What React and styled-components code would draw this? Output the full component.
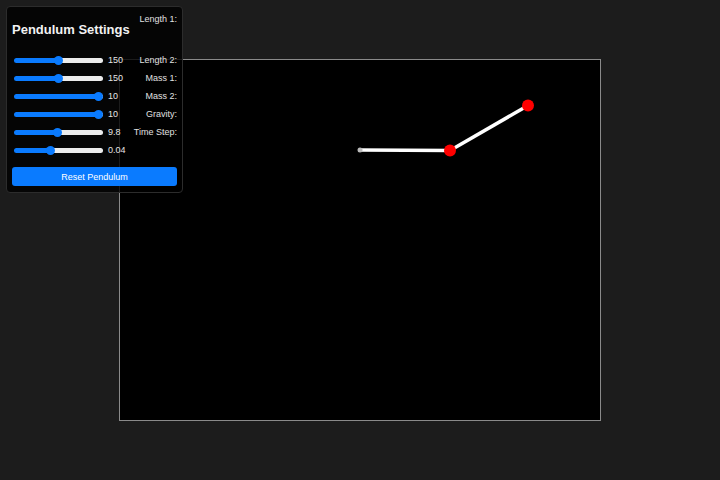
import React, { useState } from "react";
import styled, { createGlobalStyle } from "styled-components";

const GlobalStyle = createGlobalStyle`
  html, body {
    margin: 0;
    padding: 0;
    background: #1c1c1c;
    font-family: "Liberation Sans", Arial, sans-serif;
  }
`;

const Page = styled.div`
  position: relative;
  height: 100vh;
  display: flex;
  align-items: center;
  justify-content: center;
`;

const Stage = styled.div`
  width: 480px;
  height: 360px;
  border: 1px solid #8a8a8a;
  background: #000;
`;

const Panel = styled.div`
  position: absolute;
  top: 6px;
  left: 6px;
  width: 165px;
  padding: 3px 5px 6px;
  background: rgba(0, 0, 0, 0.8);
  border: 1px solid #2c2c2c;
  border-radius: 4px;
  color: #eee;
`;

const Top = styled.div`
  display: flex;
  justify-content: space-between;
`;

const Controls = styled.div`
  display: flex;
  flex-direction: column;
  min-width: 0;
`;

const Title = styled.h2`
  margin: 12px 0 13px;
  font-size: 13px;
  line-height: 16px;
  font-weight: 700;
  white-space: nowrap;
  color: #f2f2f2;
`;

const Row = styled.div`
  display: flex;
  align-items: center;
  height: 18px;
`;

const Slider = styled.input`
  -webkit-appearance: none;
  appearance: none;
  width: 89px;
  height: 18px;
  margin: 0 5px 0 2px;
  background: transparent;

  &::-webkit-slider-runnable-track {
    height: 5px;
    border-radius: 3px;
    background: ${({ $fill }) =>
      `linear-gradient(to right, #0a7bff ${$fill}%, #ececec ${$fill}%)`};
  }

  &::-webkit-slider-thumb {
    -webkit-appearance: none;
    width: 9px;
    height: 9px;
    margin-top: -2px;
    border-radius: 50%;
    background: #0a7bff;
    border: none;
  }
`;

const Value = styled.span`
  font-size: 9px;
  color: #e6e6e6;
`;

const Labels = styled.div`
  display: flex;
  flex-direction: column;
  align-items: flex-end;
  flex-shrink: 0;
`;

const Label = styled.label`
  height: 18px;
  line-height: 18px;
  font-size: 9px;
  white-space: nowrap;
  color: #e0e0e0;
  margin-bottom: ${({ $first }) => ($first ? "23px" : "0")};
`;

const Button = styled.button`
  display: block;
  width: 100%;
  height: 19px;
  margin-top: 8px;
  border: none;
  border-radius: 3px;
  background: #0a7bff;
  color: #fff;
  font-family: inherit;
  font-size: 9px;
  cursor: pointer;
`;

const settings = [
  { label: "Length 1:", value: 150, min: 50, max: 250, step: 1 },
  { label: "Length 2:", value: 150, min: 50, max: 250, step: 1 },
  { label: "Mass 1:", value: 10, min: 1, max: 10, step: 1 },
  { label: "Mass 2:", value: 10, min: 1, max: 10, step: 1 },
  { label: "Gravity:", value: 9.8, min: 0, max: 20, step: 0.1 },
  { label: "Time Step:", value: 0.04, min: 0, max: 0.1, step: 0.01 },
];

// fill point on the track matches the thumb centre (9px thumb, 89px track)
const fillFor = (s) => {
  const p = (s.value - s.min) / (s.max - s.min);
  return ((4.5 + p * 80) / 89) * 100;
};

const Pendulum = () => (
  <svg width="480" height="360" viewBox="0 0 480 360">
    <line x1="240" y1="90" x2="330" y2="90.5" stroke="#fff" strokeWidth="3.5" />
    <line x1="330" y1="90.5" x2="408" y2="45.5" stroke="#fff" strokeWidth="3.5" />
    <circle cx="240" cy="90" r="2.5" fill="#bbb" />
    <circle cx="330" cy="90.5" r="6" fill="#ff0000" />
    <circle cx="408" cy="45.5" r="6" fill="#ff0000" />
  </svg>
);

const App = () => {
  const [values, setValues] = useState(settings);

  const update = (i, v) =>
    setValues((prev) => prev.map((s, j) => (j === i ? { ...s, value: v } : s)));

  return (
    <Page>
      <GlobalStyle />
      <Stage>
        <Pendulum />
      </Stage>
      <Panel>
        <Top>
          <Controls>
            <Title>Pendulum Settings</Title>
            {values.map((s, i) => (
              <Row key={s.label}>
                <Slider
                  type="range"
                  min={s.min}
                  max={s.max}
                  step={s.step}
                  value={s.value}
                  $fill={fillFor(s)}
                  onChange={(e) => update(i, Number(e.target.value))}
                />
                <Value>{s.value}</Value>
              </Row>
            ))}
          </Controls>
          <Labels>
            {values.map((s, i) => (
              <Label key={s.label} $first={i === 0}>
                {s.label}
              </Label>
            ))}
          </Labels>
        </Top>
        <Button onClick={() => setValues(settings)}>Reset Pendulum</Button>
      </Panel>
    </Page>
  );
};

export default App;
